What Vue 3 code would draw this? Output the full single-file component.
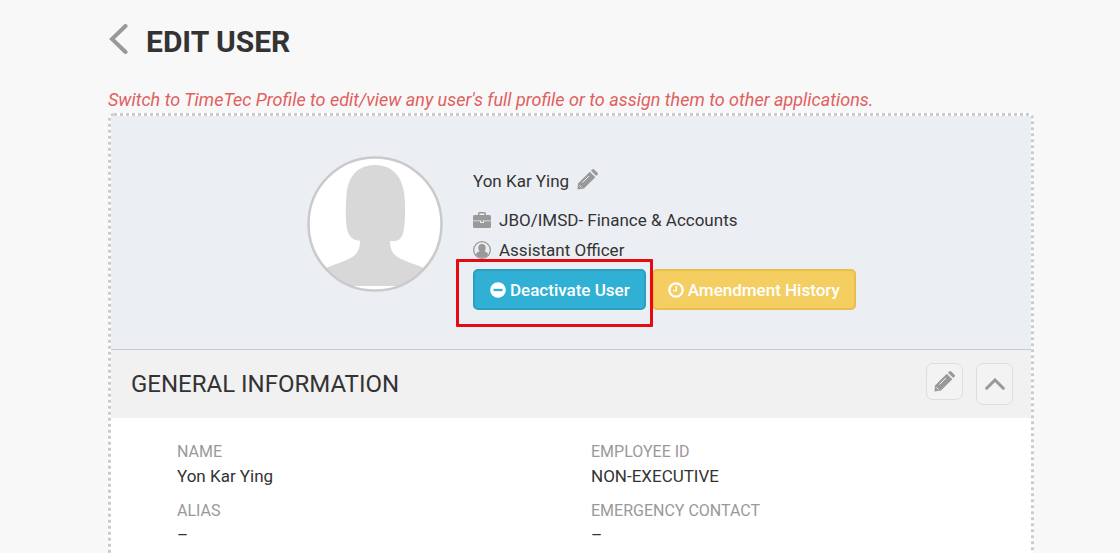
<script setup>
const fields = [
  { label: 'NAME', value: 'Yon Kar Ying' },
  { label: 'EMPLOYEE ID', value: 'NON-EXECUTIVE' },
  { label: 'ALIAS', value: '–' },
  { label: 'EMERGENCY CONTACT', value: '–' },
]
</script>

<template>
  <main class="page">
    <header class="title-bar">
      <a class="back" href="#" aria-label="Back">
        <svg width="20" height="30" viewBox="0 0 20 30"><path d="M17.500 2 4 15l13.500 13" fill="none" stroke="#999" stroke-width="4" stroke-linecap="round" /></svg>
      </a>
      <h1>EDIT USER</h1>
    </header>
    <p class="notice">Switch to TimeTec Profile to edit/view any user's full profile or to assign them to other applications.</p>

    <div class="card">
      <section class="profile">
        <svg class="avatar" viewBox="0 0 136 136" role="img" aria-label="Profile picture">
          <defs><clipPath id="avatar-clip"><circle cx="68" cy="68" r="66" /></clipPath></defs>
          <circle cx="68" cy="68" r="66.5" fill="#fff" />
          <path clip-path="url(#avatar-clip)" fill="#d8d8d8" d="M68 9C51 9 41 20 39.500 39C38.500 50 38.500 62 39.500 70C40.500 79 45 84.500 52 84.500H53C53 92 51 97 46 100.500C38 106 27 108 17 113C6 118 0 126 0 130H136C136 126 130 118 119 113C109 108 98 106 90 100.500C85 97 83 92 83 85H88C94 84.500 96.500 79 97.300 70C98.300 61 98.300 48 97.300 38C95 20 85 9 68 9Z" />
          <circle cx="68" cy="68" r="66.500" fill="none" stroke="#cacaca" stroke-width="2.500" />
        </svg>
        <div class="details">
          <div class="name-row">
            <span>Yon Kar Ying</span>
            <button class="plain" type="button" aria-label="Edit name">
              <svg width="21" height="21" viewBox="0 0 21 21"><g fill="#999"><path d="M12.800 2.700 18.300 8.200 7 19.500.5 20.500 1 14.500Z" /><path d="m14 1.700 1.200-1.200q1-1 2 0l3.300 3.300q1 1 0 2L19.300 7Z" /></g><path d="m2.500 16.500 2 2M5.500 13.500l6.500-6.500" stroke="#ebeef3" stroke-width="1" /></svg>
            </button>
          </div>
          <div class="info-row department">
            <svg width="18" height="16" viewBox="0 0 18 16"><g fill="#999"><path d="M5 3V1.500Q5 0 6.500 0h5Q13 0 13 1.500V3h3.500Q18 3 18 4.500V8.500H0V4.500Q0 3 1.500 3Zm1.500 0h5V1.500h-5Z" /><path d="M0 9.300h7v1.700h4V9.300h7v5.200q0 1.500-1.500 1.500h-15Q0 16 0 14.500Z" /><path d="M8 8.500h2v1.500H8Z" /></g></svg>
            <span>JBO/IMSD- Finance &amp; Accounts</span>
          </div>
          <div class="info-row">
            <svg width="18" height="18" viewBox="0 0 18 18"><circle cx="9" cy="9" r="8.300" fill="none" stroke="#999" stroke-width="1.300" /><path fill="#999" d="M9 3C6.500 3 5.300 4.600 5.300 6.800c0 1.600.6 2.800 1.300 3.500-2 .4-3.400 1.500-3.800 3.500C4.300 15.600 6.400 16.800 9 16.800s4.700-1.200 6.200-3c-.4-2-1.800-3.100-3.800-3.500.7-.7 1.300-1.900 1.300-3.500C12.700 4.600 11.500 3 9 3Z" /></svg>
            <span>Assistant Officer</span>
          </div>
          <div class="actions">
            <button class="btn history" type="button">
              <svg width="16" height="16" viewBox="0 0 16 16"><g fill="none" stroke="#fff"><circle cx="8" cy="8" r="6.700" stroke-width="2.300" /><path d="M8.300 4v4.600H5" stroke-width="1.400" /></g></svg>
              <span>Amendment History</span>
            </button>
            <div class="marked">
              <button class="btn deactivate" type="button">
                <svg width="16" height="16" viewBox="0 0 16 16"><circle cx="8" cy="8" r="7.800" fill="#fff" /><path d="M3.500 8h9" stroke="#30b0d5" stroke-width="2.300" /></svg>
                <span>Deactivate User</span>
              </button>
            </div>
          </div>
        </div>
      </section>

      <section>
        <div class="section-head">
          <h2>GENERAL INFORMATION</h2>
          <div class="tools">
            <button class="tool edit" type="button" aria-label="Edit general information">
              <svg width="21" height="21" viewBox="0 0 21 21"><g fill="#999"><path d="M12.800 2.700 18.300 8.200 7 19.500.5 20.500 1 14.500Z" /><path d="m14 1.700 1.200-1.200q1-1 2 0l3.300 3.300q1 1 0 2L19.300 7Z" /></g><path d="m2.500 16.500 2 2M5.500 13.500l6.500-6.500" stroke="#f3f3f3" stroke-width="1" /></svg>
            </button>
            <button class="tool collapse" type="button" aria-label="Collapse section">
              <svg width="20" height="12" viewBox="0 0 20 12"><path d="M1.700 10.300 10 2l8.300 8.300" fill="none" stroke="#999" stroke-width="3" stroke-linecap="round" /></svg>
            </button>
          </div>
        </div>
        <dl class="fields">
          <div v-for="field in fields" :key="field.label">
            <dt>{{ field.label }}</dt>
            <dd>{{ field.value }}</dd>
          </div>
        </dl>
      </section>
    </div>
  </main>
</template>

<style>
body { background: #f8f8f8; overflow: hidden; }
</style>

<style scoped>
* { box-sizing: border-box; }
.page {
  padding: 24px 86px 0 108px;
  font-family: Roboto, "Noto Sans", sans-serif;
  font-size: 17px;
  line-height: 24px;
  color: #333;
}
.title-bar { display: flex; align-items: center; gap: 18px; height: 36px; }
.back { display: flex; padding-bottom: 6px; }
h1 { margin: 0; font-size: 30px; line-height: 36px; font-weight: 700; }
h2 { margin: 0; font-size: 24px; line-height: 32px; font-weight: 400; }
.notice { margin: 28px 0 1px; color: #e06060; font-size: 18px; font-style: italic; white-space: nowrap; }
.card { border: 3px dotted #ccc; border-bottom: 0; border-radius: 6px 6px 0 0; background: #fff; }
.profile {
  display: flex;
  gap: 30px;
  padding: 40px 20px 39px 196px;
  background: #ebeef3;
  border-bottom: 1px solid #c6cad2;
}
.avatar { width: 136px; height: 136px; flex: none; }
.details { padding-top: 13px; }
.name-row, .info-row { display: flex; align-items: center; white-space: nowrap; }
.name-row { gap: 8px; }
.info-row { gap: 8px; height: 30px; }
.info-row svg { flex: none; }
.department { margin-top: 12px; }
.plain { display: flex; padding: 0 0 3px; border: 0; background: none; }
.actions { display: flex; flex-direction: row-reverse; justify-content: flex-end; gap: 6px; margin-top: 4px; }
.marked { position: relative; }
.marked::after {
  content: "";
  position: absolute;
  inset: -10px -7px -17px -17px;
  border: 3px solid #e60b12;
  border-radius: 1px;
  pointer-events: none;
}
.btn {
  display: flex;
  align-items: center;
  gap: 4px;
  height: 41px;
  padding: 0 14px 0 15px;
  border: 2px solid;
  border-radius: 5px;
  color: #fff;
  font: 500 17px/24px Roboto, "Noto Sans", sans-serif;
  white-space: nowrap;
}
.deactivate { background: #30b0d5; border-color: #2b9fc0; }
.history { padding: 0 14px; background: #f5ce62; border-color: #eabf49; }
.section-head {
  display: flex;
  align-items: center;
  justify-content: space-between;
  height: 68px;
  padding: 0 18px 0 20px;
  background: #f1f1f1;
}
.tools { display: flex; align-items: flex-start; gap: 13px; }
.tool {
  display: flex;
  align-items: center;
  justify-content: center;
  width: 37px;
  height: 37px;
  padding: 0;
  border: 1px solid #ddd;
  border-radius: 7px;
  background: #f3f3f3;
}
.collapse { height: 42px; }
.fields {
  display: grid;
  grid-template-columns: 1fr 1fr;
  row-gap: 10px;
  margin: 0;
  padding: 22px 26px 20px 66px;
}
dt { color: #999; font-size: 16px; }
dd { margin: 0; line-height: 25px; }
</style>
